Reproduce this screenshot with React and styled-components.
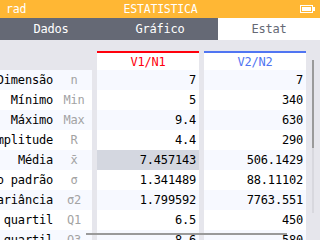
import React from "react";
import styled, { createGlobalStyle } from "styled-components";

const Global = createGlobalStyle`
  html, body { margin: 0; padding: 0; background: #e6e6ec; }
  * { box-sizing: border-box; }
`;

const Screen = styled.div`
  width: 320px;
  height: 240px;
  overflow: hidden;
  display: flex;
  flex-direction: column;
  font-family: "DejaVu Sans Mono", "Liberation Mono", monospace;
  font-size: 12px;
  letter-spacing: -0.2px;
  color: #000;
  background: #e6e6ec;
`;

const TitleBar = styled.div`
  height: 18px;
  flex: 0 0 18px;
  background: #ffb734;
  color: #fff;
  display: grid;
  grid-template-columns: 1fr auto 1fr;
  align-items: center;
  padding: 0 5px 0 6px;
  font-size: 11.5px;
`;

const Battery = styled.div`
  justify-self: end;
  display: flex;
  align-items: center;
`;

const TabBar = styled.div`
  height: 22px;
  flex: 0 0 22px;
  background: #656975;
  display: flex;
`;

const Tab = styled.div`
  flex: 1 1 auto;
  display: flex;
  align-items: center;
  justify-content: center;
  color: ${(p) => (p.$active ? "#656975" : "#fff")};
  background: ${(p) => (p.$active ? "#fff" : "transparent")};
`;

const Content = styled.div`
  flex: 1;
  position: relative;
  padding-top: 11px;
  overflow: hidden;
`;

const Table = styled.div`
  display: grid;
  grid-template-columns: 92px 102px 102px;
  grid-template-rows: 19px;
  grid-auto-rows: 20px;
  column-gap: 5px;
`;

const Corner = styled.div``;

const HeaderCell = styled.div`
  background: #fff;
  border-top: 2px solid ${(p) => p.$color};
  color: ${(p) => p.$color};
  display: flex;
  align-items: center;
  justify-content: center;
`;

const TitleCell = styled.div`
  background: ${(p) => (p.$alt ? "#f7f9ff" : "#fff")};
  display: flex;
  align-items: center;
  justify-content: flex-end;
  overflow: hidden;
  white-space: nowrap;
  padding-right: 4px;
`;

const TitleText = styled.span`
  flex: 0 0 auto;
`;

const Symbol = styled.span`
  flex: 0 0 28px;
  margin-left: 7px;
  text-align: center;
  color: #a3a3a3;
`;

const ValueCell = styled.div`
  background: ${(p) => (p.$selected ? "#d4d7e0" : p.$alt ? "#f7f9ff" : "#fff")};
  display: flex;
  align-items: center;
  justify-content: flex-end;
  padding-right: 3px;
  white-space: nowrap;
`;

const VTrack = styled.div`
  position: absolute;
  left: 312px;
  top: 20px;
  width: 2px;
  height: 153px;
  background: #d8d8de;
`;

const VThumb = styled.div`
  width: 2px;
  height: 88px;
  background: #9a9a9a;
`;

const HThumb = styled.div`
  position: absolute;
  left: 86px;
  top: 193px;
  width: 201px;
  height: 2px;
  background: #9a9a9a;
`;

const rows = [
  ["Dimensão", "n", "7", "7"],
  ["Mínimo", "Min", "5", "340"],
  ["Máximo", "Max", "9.4", "630"],
  ["Amplitude", "R", "4.4", "290"],
  ["Média", "x̄", "7.457143", "506.1429"],
  ["Desvio padrão", "σ", "1.341489", "88.11102"],
  ["Variância", "σ2", "1.799592", "7763.551"],
  ["Primeiro quartil", "Q1", "6.5", "450"],
  ["Terceiro quartil", "Q3", "8.6", "580"],
];

export default function App() {
  return (
    <>
      <Global />
      <Screen>
        <TitleBar>
          <span>rad</span>
          <span>ESTATISTICA</span>
          <Battery>
            <svg width="15" height="8" viewBox="0 0 15 8">
              <rect x="0.5" y="0.5" width="12" height="7" fill="none" stroke="#fff" />
              <rect x="2" y="2" width="9" height="4" fill="#fff" />
              <rect x="13" y="2" width="2" height="4" fill="#fff" />
            </svg>
          </Battery>
        </TitleBar>
        <TabBar>
          <Tab>Dados</Tab>
          <Tab>Gráfico</Tab>
          <Tab $active>Estat</Tab>
        </TabBar>
        <Content>
          <Table>
            <Corner />
            <HeaderCell $color="#ff000c">V1/N1</HeaderCell>
            <HeaderCell $color="#5075f2">V2/N2</HeaderCell>
            {rows.map(([t, s, a, b], i) => (
              <React.Fragment key={t}>
                <TitleCell $alt={i % 2 === 0}>
                  <TitleText>{t}</TitleText>
                  <Symbol>{s}</Symbol>
                </TitleCell>
                <ValueCell $alt={i % 2 === 0} $selected={i === 4}>{a}</ValueCell>
                <ValueCell $alt={i % 2 === 0}>{b}</ValueCell>
              </React.Fragment>
            ))}
          </Table>
          <VTrack>
            <VThumb />
          </VTrack>
          <HThumb />
        </Content>
      </Screen>
    </>
  );
}
